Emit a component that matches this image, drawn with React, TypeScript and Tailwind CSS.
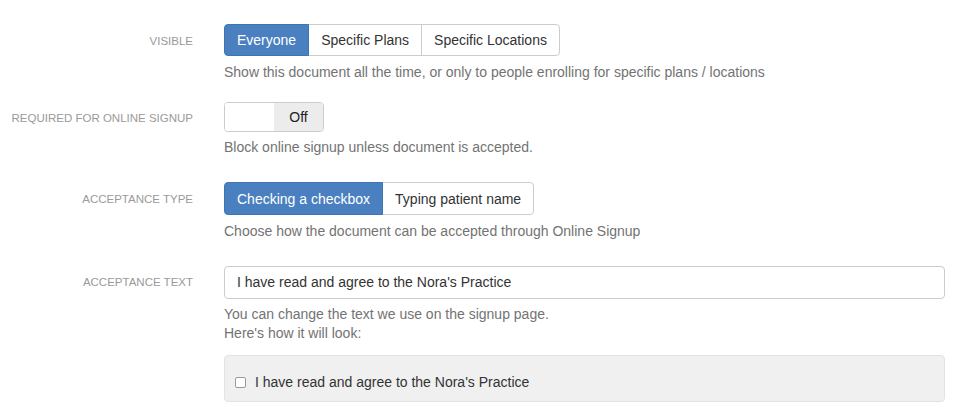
import type { ReactNode } from "react";

function Row({ label, children, labelClass = "pt-[10px]" }: { label: string; children: ReactNode; labelClass?: string }) {
  return (
    <div className="flex">
      <div className={`w-[193px] shrink-0 text-right text-[11.5px] uppercase leading-[14px] text-[#9a9a9a] ${labelClass}`}>
        {label}
      </div>
      <div className="ml-[31px] min-w-0 flex-1">{children}</div>
    </div>
  );
}

function Segmented({ options, active, tall }: { options: string[]; active: number; tall?: boolean }) {
  return (
    <div className="flex">
      {options.map((o, i) => {
        const first = i === 0;
        const last = i === options.length - 1;
        const on = i === active;
        return (
          <button
            key={o}
            className={`${tall ? "h-[33px]" : "h-[32px]"} border px-3 text-[14px] leading-none ${
              on ? "z-10 border-[#3f74b3] bg-[#4a80c0] text-white" : "border-[#cccccc] bg-white text-[#333]"
            } ${first ? "rounded-l-[4px]" : "-ml-px"} ${last ? "rounded-r-[4px]" : ""}`}
          >
            {o}
          </button>
        );
      })}
    </div>
  );
}

function Help({ children }: { children: ReactNode }) {
  return <p className="text-[14px] leading-[19px] text-[#737373]">{children}</p>;
}

export default function App() {
  return (
    <div className="min-h-[414px] bg-white pt-[24px] pr-[14px]" style={{ fontFamily: '"Liberation Sans", Arial, sans-serif' }}>
      <Row label="Visible">
        <Segmented options={["Everyone", "Specific Plans", "Specific Locations"]} active={0} />
        <div className="mt-[7px]">
          <Help>Show this document all the time, or only to people enrolling for specific plans / locations</Help>
        </div>
      </Row>

      <div className="mt-[20px]">
        <Row label="Required for online signup" labelClass="pt-[9px]">
          <div className="flex h-[30px] w-[100px] overflow-hidden rounded-[4px] border border-[#cccccc]">
            <div className="w-[49px] bg-white" />
            <div className="flex flex-1 items-center justify-center bg-[#ececec] text-[14px] text-[#222]">Off</div>
          </div>
          <div className="mt-[6px]">
            <Help>Block online signup unless document is accepted.</Help>
          </div>
        </Row>
      </div>

      <div className="mt-[25px]">
        <Row label="Acceptance type">
          <Segmented options={["Checking a checkbox", "Typing patient name"]} active={0} tall />
          <div className="mt-[7px]">
            <Help>Choose how the document can be accepted through Online Signup</Help>
          </div>
        </Row>
      </div>

      <div className="mt-[25px]">
        <Row label="Acceptance text" labelClass="pt-[9px]">
          <div className="flex h-[33px] items-center rounded-[4px] border border-[#cccccc] bg-white px-3 text-[14px] text-[#333]">
            I have read and agree to the Nora's Practice
          </div>
          <div className="mt-[6px]">
            <Help>You can change the text we use on the signup page.</Help>
            <Help>Here's how it will look:</Help>
          </div>
          <div className="mt-[12px] flex h-[47px] items-center rounded-[4px] border border-[#e3e3e3] bg-[#f0f0f0] pl-[10px] pt-[8px] text-[14px] text-[#333]">
            <span className="mr-[9px] inline-block h-[11px] w-[11px] rounded-[2px] border border-[#9a9a9a] bg-white" />
            I have read and agree to the Nora's Practice
          </div>
        </Row>
      </div>
    </div>
  );
}
